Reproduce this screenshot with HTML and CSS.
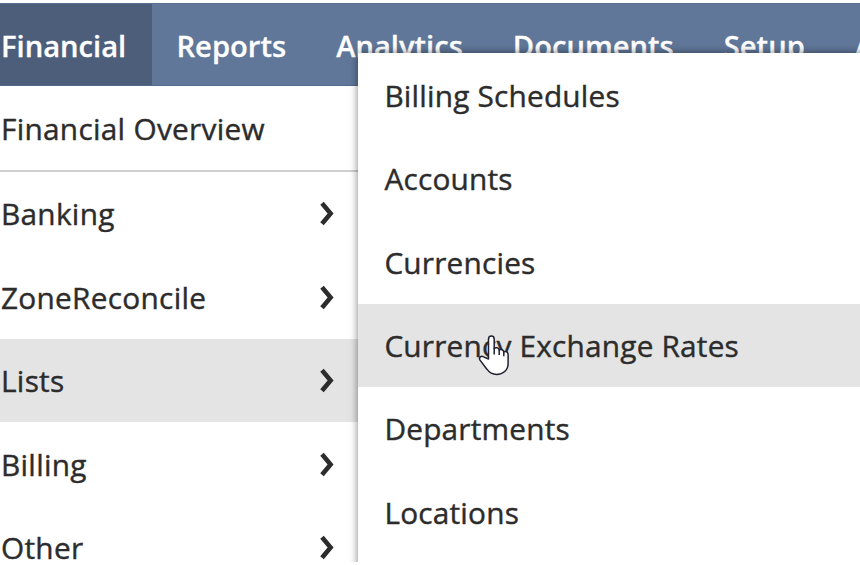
FILE: index.html
```html
<!DOCTYPE html>
<html lang="en">
<head>
<meta charset="utf-8">
<title>Financial menu</title>
<link rel="stylesheet" href="styles.css">
</head>
<body>
<svg class="symbols" width="0" height="0" aria-hidden="true">
  <symbol id="chevron" viewBox="0 0 14 26"><path d="M2 2.2 10.6 12.5 2 22.8" fill="none" stroke="#2c2c2c" stroke-width="4.6"/></symbol>
</svg>
<div class="screen">
  <nav class="topbar">
    <a class="tab active">Financial</a>
    <a class="tab">Reports</a>
    <a class="tab">Analytics</a>
    <a class="tab">Documents</a>
    <a class="tab">Setup</a>
    <a class="tab">A</a>
  </nav>
  <div class="menu">
    <a class="item overview">Financial Overview</a>
    <a class="item">Banking<svg class="chevron"><use href="#chevron"/></svg></a>
    <a class="item">ZoneReconcile<svg class="chevron"><use href="#chevron"/></svg></a>
    <a class="item selected">Lists<svg class="chevron"><use href="#chevron"/></svg></a>
    <a class="item">Billing<svg class="chevron"><use href="#chevron"/></svg></a>
    <a class="item">Other<svg class="chevron"><use href="#chevron"/></svg></a>
  </div>
  <div class="submenu">
    <a class="item">Billing Schedules</a>
    <a class="item">Accounts</a>
    <a class="item">Currencies</a>
    <a class="item selected">Currency Exchange Rates</a>
    <a class="item">Departments</a>
    <a class="item">Locations</a>
    <a class="item"></a>
  </div>
  <svg class="pointer" viewBox="0 0 34 44" aria-hidden="true">
    <path d="M11.5 25V5.2c0-4.2 5.7-4.2 5.7 0v9.3c1.4-1.5 4.6-1 5 1.4 1.6-1 4.2-.2 4.6 1.9 2-.8 4.3.3 4.3 2.8v9.2c0 6.4-5.2 10.6-11.4 10.6-4.4 0-7.6-2-9.8-5.2L3 26.1c-1.6-2.8 1.3-4.6 3.6-3.2z" fill="#fff" stroke="#202033" stroke-width="1.5" stroke-linejoin="round"/>
    <path d="M17.2 14v6.5M22.2 15.8v5.2M26.8 17.5v4.8" fill="none" stroke="#202033" stroke-width="1.5"/>
  </svg>
</div>
</body>
</html>
```
FILE: styles.css
```css
* { box-sizing: border-box; }
body { margin: 0; background: #fff; }
.symbols { display: block; }
.screen {
  position: relative;
  width: 860px;
  height: 562px;
  padding-top: 3.4px;
  overflow: hidden;
  font: 400 29.8px/40px "Open Sans", sans-serif;
  color: #2c2c2c;
}
.topbar {
  display: flex;
  height: 83px;
  background: #607799;
  border-bottom: 1px solid #526a8c;
  border-top: 1px solid #586f91;
}
.tab {
  flex: none;
  padding: 21.6px 25px 0;
  color: #fff;
  font-size: 29.15px;
  font-weight: 600;
  -webkit-text-stroke: .3px #fff;
}
.tab + .tab { position: relative; left: -.5px; }
.tab.active {
  width: 152px;
  padding-left: 1px;
  background: #4d5e7a;
}
.menu { width: 358px; letter-spacing: .28px; }
.item {
  display: flex;
  align-items: center;
  justify-content: space-between;
  height: 83.4px;
  padding-top: 1.4px;
  white-space: nowrap;
  -webkit-text-stroke: .4px #2c2c2c;
}
.menu .item { padding-left: 1px; padding-right: 24.5px; }
.menu .overview { height: 85.6px; border-bottom: 2px solid #cfcfcf; }
.selected { background: #e4e4e4; }
.chevron { width: 14px; height: 26px; -webkit-text-stroke: 0; }
.submenu {
  position: absolute;
  top: 53.4px;
  left: 358.3px;
  width: 520px;
  background: #fff;
  box-shadow: 0 0 8px rgba(0, 0, 0, .5);
  letter-spacing: .2px;
}
.submenu .item { padding-left: 26.1px; }
.pointer {
  position: absolute;
  top: 333.5px;
  left: 476.5px;
  width: 34px;
  height: 44px;
}
```
